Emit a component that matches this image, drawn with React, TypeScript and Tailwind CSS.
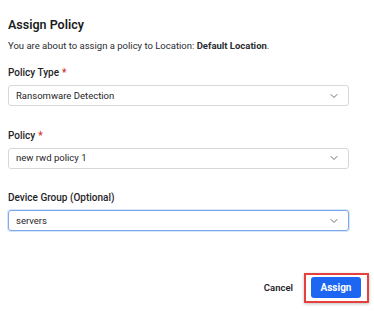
import { ChevronDown } from 'lucide-react';

function Field({ label, required, value, focused }: { label: string; required?: boolean; value: string; focused?: boolean }) {
    return (
        <div className="flex flex-col">
            <div className="text-[10px] font-medium text-[#1f2328] leading-[12px] h-[12px]">
                {label}
                {required && <span className="text-[#d12f2f] ml-[3px]">*</span>}
            </div>
            <div
                className={`mt-[6px] h-[21px] w-[341px] rounded-[3px] border flex items-center justify-between pl-[7px] pr-[8px] ${
                    focused ? 'border-[#7aa9ee] shadow-[0_0_0_1px_rgba(122,169,238,0.3)]' : 'border-[#d6d8db]'
                }`}
            >
                <span className="text-[9.5px] text-[#1f2328] leading-[12px]">{value}</span>
                <ChevronDown size={12} strokeWidth={1.5} className="text-[#3a3d42]" />
            </div>
        </div>
    );
}

export default function App() {
    return (
        <div className="w-[374px] h-[311px] bg-white overflow-hidden" style={{ fontFamily: 'Roboto, "Liberation Sans", sans-serif' }}>
            <div className="pl-[8px] pt-[17px]">
                <h2 className="text-[12.5px] font-semibold text-[#1a1d21] leading-[16px]">Assign Policy</h2>
                <p className="mt-[7px] text-[9.5px] text-[#2a2d31] leading-[12px]">
                    You are about to assign a policy to Location: <span className="font-bold">Default Location</span>.
                </p>

                <div className="mt-[15px] flex flex-col gap-[23.5px]">
                    <Field label="Policy Type" required value="Ransomware Detection" />
                    <Field label="Policy" required value="new rwd policy 1" />
                    <Field label="Device Group (Optional)" value="servers" focused />
                </div>
            </div>

            <div className="mt-[42px] flex items-center justify-end pr-[5px]">
                <button className="text-[9.5px] font-semibold text-[#1f2328] mr-[11px]">Cancel</button>
                <div className="border-2 border-[#e5403b] pl-[5px] pr-[6px] pt-[2px] pb-[3px] shadow-[0_1px_3px_rgba(0,0,0,0.25)]">
                    <button className="block h-[21px] w-[50px] rounded-[3px] bg-[#1c66f2] text-white text-[10px] font-bold">
                        Assign
                    </button>
                </div>
            </div>
        </div>
    );
}
